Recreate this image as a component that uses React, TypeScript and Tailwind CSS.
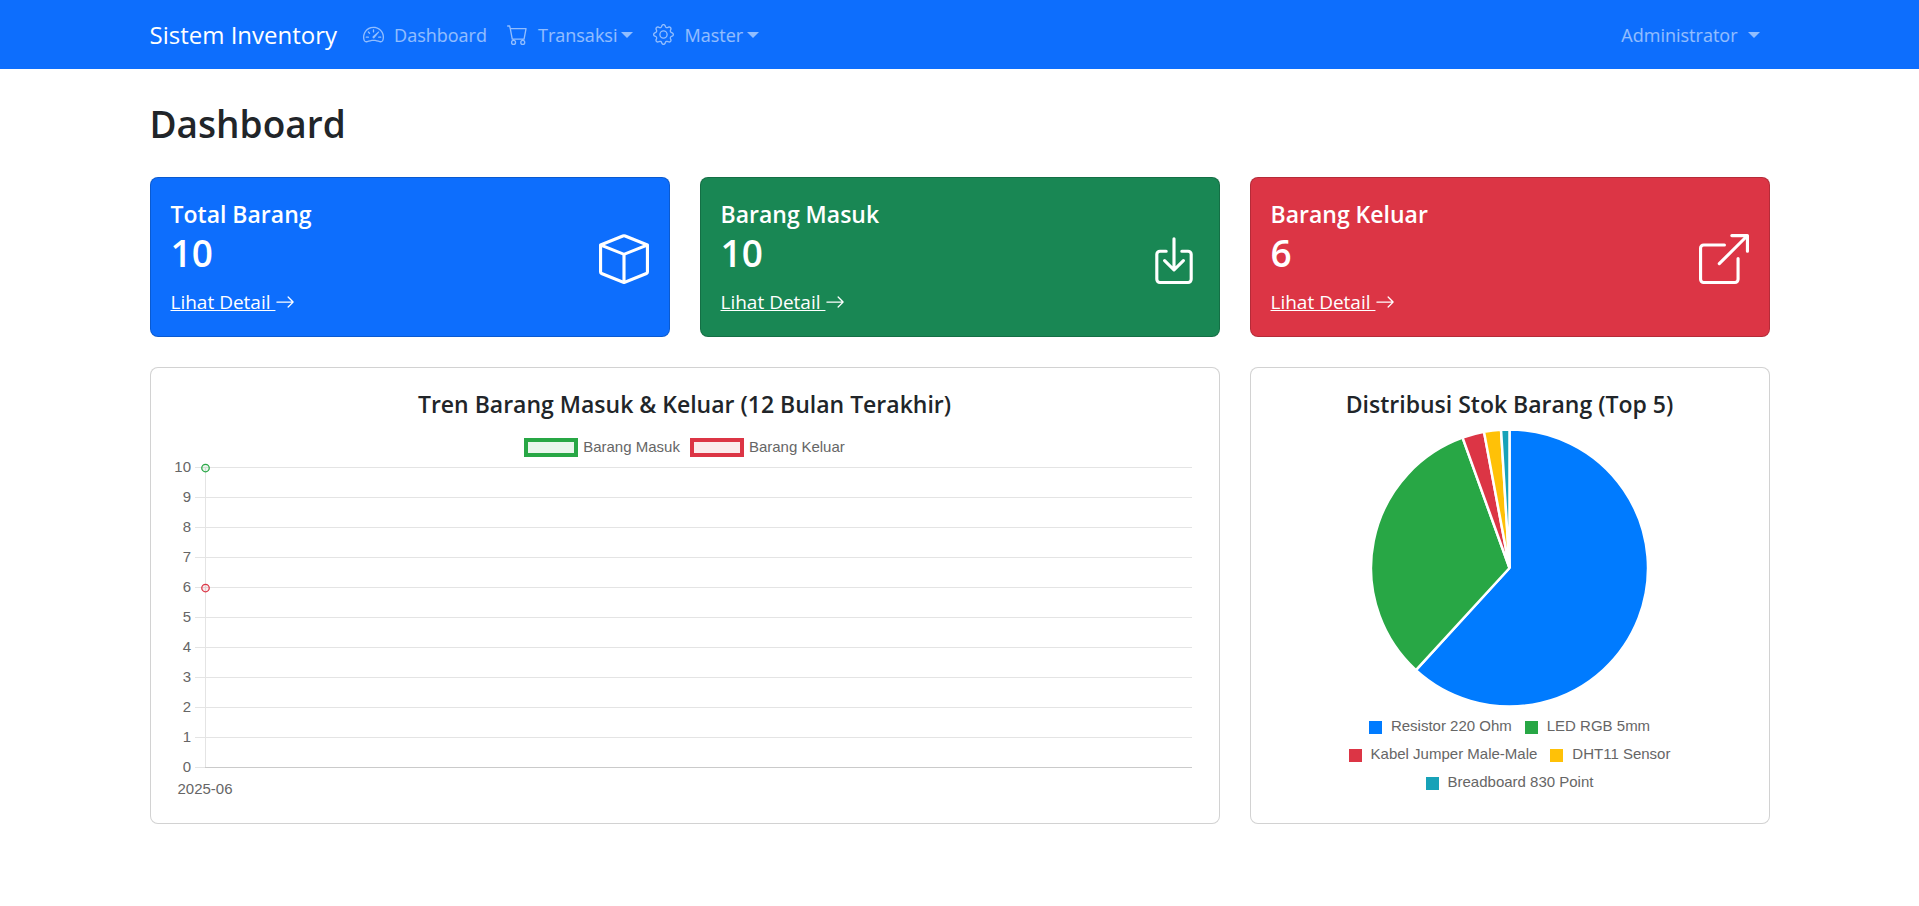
import type { ComponentType, ReactNode } from "react";
import {
  BsArrowRight,
  BsBox,
  BsBoxArrowInDown,
  BsBoxArrowUpRight,
  BsCart,
  BsGear,
  BsSpeedometer2,
} from "react-icons/bs";

type Icon = ComponentType<{ className?: string }>;

function Caret() {
  return (
    <span className="h-0 w-0 border-x-[6px] border-t-[6px] border-x-transparent border-t-current" />
  );
}

function NavDropdown({ icon: Glyph, label }: { icon: Icon; label: string }) {
  return (
    <button type="button" className="flex items-center px-2.5 text-white/55">
      <Glyph className="mr-2.5 h-[21px] w-[21px]" />
      <span className="mr-1">{label}</span>
      <Caret />
    </button>
  );
}

function Navbar() {
  return (
    <nav className="bg-[#0d6efd]">
      <div className="mx-auto flex h-[69px] max-w-[1650px] items-center px-[15px] text-lg">
        <a href="#" className="mr-4 text-2xl text-white">
          Sistem Inventory
        </a>
        <a href="#dashboard" className="flex items-center px-2.5 text-white/55">
          <BsSpeedometer2 className="mr-2.5 h-[21px] w-[21px]" />
          Dashboard
        </a>
        <NavDropdown icon={BsCart} label="Transaksi" />
        <NavDropdown icon={BsGear} label="Master" />
        <button type="button" className="ml-auto flex items-center gap-2.5 px-2.5 text-white/55">
          Administrator
          <Caret />
        </button>
      </div>
    </nav>
  );
}

interface StatProps {
  title: string;
  value: number;
  icon: Icon;
  color: string;
}

const stats: StatProps[] = [
  { title: "Total Barang", value: 10, icon: BsBox, color: "bg-[#0d6efd]" },
  { title: "Barang Masuk", value: 10, icon: BsBoxArrowInDown, color: "bg-[#198754]" },
  { title: "Barang Keluar", value: 6, icon: BsBoxArrowUpRight, color: "bg-[#dc3545]" },
];

function StatCard({ title, value, icon: Glyph, color }: StatProps) {
  return (
    <section
      className={`flex items-center justify-between rounded-lg border border-black/[.175] p-5 text-white ${color}`}
    >
      <div>
        <h2 className="text-[23px] leading-8 font-semibold">{title}</h2>
        <p className="mb-3 text-[37px] leading-[46px] font-semibold">{value}</p>
        <a href="#detail" className="flex items-center text-[19px] leading-7">
          <span className="whitespace-pre underline">{"Lihat Detail "}</span>
          <BsArrowRight className="h-5 w-5" />
        </a>
      </div>
      <Glyph className="mt-1 h-[50px] w-[50px]" />
    </section>
  );
}

function Panel({ title, className, children }: { title: string; className?: string; children: ReactNode }) {
  return (
    <section className={`rounded-lg border border-black/[.175] bg-white p-5 ${className ?? ""}`}>
      <h2 className="text-center text-[23px] leading-8 font-semibold">{title}</h2>
      {children}
    </section>
  );
}

const ticks = [10, 9, 8, 7, 6, 5, 4, 3, 2, 1, 0];

function TrendChart() {
  return (
    <div className="pt-[18px] font-['Liberation_Sans',Arial,sans-serif] text-[15px] text-[#666]">
      <ul className="flex h-[19px] items-center justify-center gap-2.5 leading-[17px]">
        <li className="flex gap-[5px]">
          <span className="h-[19px] w-[54px] border-4 border-[#28a745] bg-[#e9f6ec]" />
          Barang Masuk
        </li>
        <li className="flex gap-[5px]">
          <span className="h-[19px] w-[54px] border-4 border-[#dc3545] bg-[#fbebec]" />
          Barang Keluar
        </li>
      </ul>
      <div className="pr-[7px]">
        <svg className="block h-[346px] w-full overflow-visible" role="img" aria-label="Tren barang">
          {ticks.map((tick, i) => (
            <g key={tick}>
              <line x1="24" x2="100%" y1={10.5 + i * 30} y2={10.5 + i * 30} stroke="#e4e4e4" />
              <text x="20" y={15 + i * 30} textAnchor="end" fill="#666">
                {tick}
              </text>
            </g>
          ))}
          <line x1="34.5" x2="34.5" y1="10" y2="311" stroke="#e4e4e4" />
          <line x1="34" x2="100%" y1="310.5" y2="310.5" stroke="#cacaca" />
          <circle cx="34.5" cy="11" r="3.75" fill="#28a745" fillOpacity="0.1" stroke="#28a745" strokeWidth="1.25" />
          <circle cx="34.5" cy="131" r="3.75" fill="#dc3545" fillOpacity="0.1" stroke="#dc3545" strokeWidth="1.25" />
          <text x="34" y="337" textAnchor="middle" fill="#666">
            2025-06
          </text>
        </svg>
      </div>
    </div>
  );
}

const slices = [
  { from: 0, to: 222.5, color: "#007bff" },
  { from: 222.5, to: 340.2, color: "#28a745" },
  { from: 340.2, to: 349.4, color: "#dc3545" },
  { from: 349.4, to: 356.5, color: "#ffc107" },
  { from: 356.5, to: 360, color: "#17a2b8" },
];

function slicePath(from: number, to: number) {
  const point = (deg: number) => {
    const a = (deg * Math.PI) / 180;
    return `${(138.5 * Math.sin(a)).toFixed(2)} ${(-138.5 * Math.cos(a)).toFixed(2)}`;
  };
  return `M0 0L${point(from)}A138.5 138.5 0 ${to - from > 180 ? 1 : 0} 1 ${point(to)}Z`;
}

const legendRows = [
  [
    { label: "Resistor 220 Ohm", color: "bg-[#007bff]" },
    { label: "LED RGB 5mm", color: "bg-[#28a745]" },
  ],
  [
    { label: "Kabel Jumper Male-Male", color: "bg-[#dc3545]" },
    { label: "DHT11 Sensor", color: "bg-[#ffc107]" },
  ],
  [{ label: "Breadboard 830 Point", color: "bg-[#17a2b8]" }],
];

function StockChart() {
  return (
    <div className="font-['Liberation_Sans',Arial,sans-serif] text-[15px] text-[#666]">
      <svg viewBox="-139.5 -140 280 280" className="mx-auto mt-2 block h-[280px] w-[280px]" role="img" aria-label="Distribusi stok">
        {slices.map((s) => (
          <path
            key={s.color}
            d={slicePath(s.from, s.to)}
            fill={s.color}
            stroke="#fff"
            strokeWidth="2.5"
            strokeLinejoin="bevel"
          />
        ))}
      </svg>
      <div className="pt-[5px]">
        {legendRows.map((row) => (
          <ul key={row[0].label} className="flex h-7 items-center justify-center gap-[13px]">
            {row.map((item) => (
              <li key={item.label} className="flex items-center gap-[9px]">
                <span className={`h-[13px] w-[13px] ${item.color}`} />
                <span className="pb-0.5 leading-5">{item.label}</span>
              </li>
            ))}
          </ul>
        ))}
      </div>
    </div>
  );
}

export default function App() {
  return (
    <div className="min-h-screen bg-white font-['Open_Sans','Noto_Sans',sans-serif] text-[#212529]">
      <Navbar />
      <main className="mx-auto max-w-[1650px] px-[15px] py-[30px]">
        <h1 className="mb-7 text-[37px] leading-[50px] font-semibold">Dashboard</h1>
        <div className="grid grid-cols-3 gap-[30px]">
          {stats.map((s) => (
            <StatCard key={s.title} {...s} />
          ))}
          <Panel title="Tren Barang Masuk & Keluar (12 Bulan Terakhir)" className="col-span-2">
            <TrendChart />
          </Panel>
          <Panel title="Distribusi Stok Barang (Top 5)">
            <StockChart />
          </Panel>
        </div>
      </main>
    </div>
  );
}
